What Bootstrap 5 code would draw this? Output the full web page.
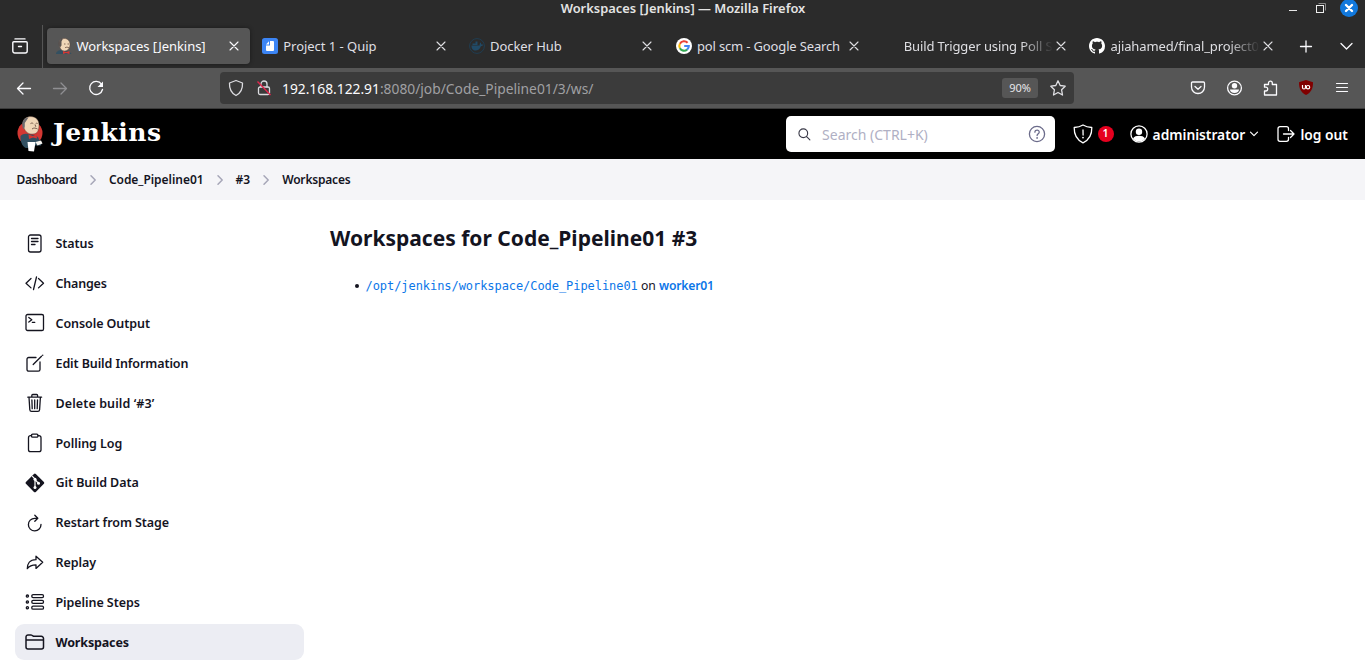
<!DOCTYPE html>
<html lang="en">
<head>
<meta charset="utf-8">
<title>Workspaces [Jenkins]</title>
<link href="https://cdn.jsdelivr.net/npm/bootstrap@5.3.0/dist/css/bootstrap.min.css" rel="stylesheet">
<style>
  body { font-family: "Noto Sans", "Open Sans", sans-serif; font-size: 12.5px; color: #14141f; background: #fff; height: 664px; overflow: hidden; }
  svg { display: block; flex: none; overflow: visible; }
  .ln { fill: none; stroke: currentColor; stroke-linecap: round; stroke-linejoin: round; }
  .t { white-space: nowrap; }
  .chrome { background: #2b2b2b; color: #fbfbfe; }
  .titlebar { height: 24px; position: relative; }
  .titlebar .caption { position: absolute; left: 1px; right: 0; top: -1px; text-align: center; font-size: 12.9px; font-weight: 600; line-height: 18px; color: #e4e4e4; }
  .winctl { position: absolute; right: 7px; top: -1px; }
  .tabstrip { height: 44px; }
  .viewbtn { width: 43px; height: 43px; border-right: 1px solid #565656; padding-left: 12px; margin-right: 2px; }
  .tab { width: 202.8px; height: 36px; margin: 0 2px; padding: 0 8px 0 8.5px; border-radius: 4px; font-size: 13px; letter-spacing: -.04px; color: #dfdfe3; }
  .tab.on { background: #565656; box-shadow: 0 0 4px rgba(0,0,0,.4); color: #fbfbfe; }
  .tab .t { flex: 1; min-width: 0; margin-left: 5px; padding-top: 1px; }
  .tab .cut { letter-spacing: -.12px; -webkit-mask-image: linear-gradient(90deg, #000 calc(100% - 32px), transparent); mask-image: linear-gradient(90deg, #000 calc(100% - 32px), transparent); }
  .tab .tight { letter-spacing: -.08px; }
  .toolbar { height: 41px; background: #565656; border-bottom: 1px solid #3a3a3a; color: #fbfbfe; padding-left: 16px; }
  .urlbar { width: 854px; height: 32px; margin-left: 116px; background: #3b3b3b; border-radius: 4px; padding: 0 8px; font-size: 13.8px; color: #a0a0a3; }
  .urlbar > .t { padding-top: 2px; }
  .zoomlvl { width: 36px; height: 20px; border-radius: 3px; background: #565656; color: #e6e6ea; font-size: 11px; }
  .jhead { height: 50px; background: #000; color: #fff; padding: 0 17px; }
  .brand { font-family: "DejaVu Serif", serif; font-weight: 700; font-size: 25px; line-height: 30px; letter-spacing: .5px; }
  .searchbox { width: 269px; height: 36px; border-radius: 5px; background: #fff; padding: 0 9px 0 12px; color: #b0b0c4; font-size: 14px; }
  .count { width: 16px; height: 16px; border-radius: 8px; background: #e6001f; font-size: 10.5px; font-weight: 600; }
  .acct { font-size: 13.8px; font-weight: 560; letter-spacing: -.02px; padding-top: 2px; }
  .acct.exit { width: 47.6px; }
  .acct.user { width: 91.8px; }
  .crumbs { height: 41px; background: #f5f5f8; padding-left: 16.5px; font-weight: 600; font-size: 12px; letter-spacing: -.03px; }
  .crumbs svg { margin: 0 12px; color: #a6a6b8; }
  .side { width: 289px; margin-left: 15px; padding-top: 25.8px; gap: 3.85px; }
  .task { height: 36px; border-radius: 9px; padding-left: 10px; font-weight: 600; color: #14141f; text-decoration: none; letter-spacing: -.07px; }
  .task:hover { color: #14141f; }
  .task.on { background: #ecedf3; font-weight: 700; letter-spacing: -.15px; }
  .task svg { margin-right: 10.5px; }
  .task .t { padding-top: 1.8px; }
  .mainpane { padding: 24px 0 0 26px; }
  h1 { font-size: 21px; font-weight: 700; line-height: 28px; margin: 0; }
  .spaces { list-style: none; padding-left: 24.5px; margin-top: 25px; line-height: 18px; font-size: 12.2px; }
  .spaces li::before { content: ""; display: inline-block; width: 4px; height: 4px; border-radius: 50%; background: #14141f; margin-right: 7px; vertical-align: 2px; }
  .spaces a { color: #0b76e8; text-decoration: none; }
  .spaces .mono { font-family: "DejaVu Sans Mono", monospace; font-size: 12px; letter-spacing: -.06px; }
  .spaces .node { font-weight: 600; letter-spacing: -.2px; }
</style>
</head>
<body>
<svg width="0" height="0" class="position-absolute">
  <symbol id="x" viewBox="0 0 16 16"><path class="ln" stroke-width="1.1" d="M4 4l8 8M12 4l-8 8"/></symbol>
  <symbol id="sep" viewBox="0 0 8 12"><path class="ln" stroke-width="1.5" d="M2 1.800L6.200 6 2 10.200"/></symbol>
  <symbol id="butler" viewBox="0 0 26 36">
    <ellipse cx="13" cy="17" rx="12.500" ry="12" fill="#d33833"/>
    <path d="M3.500 20c2-2 4.500-2.500 7-2l6 1c3 .5 5 2 5.500 4.500l3 3-1 3-6 0-1 2.500H9c-3-1-5-5-5.500-9z" fill="#335061"/>
    <path d="M6 8C5.500 3 10 .500 14 .600c5 .200 8 3.600 8 8.400 0 5-1.500 9-6 9C10.500 18.500 7 15 6 8z" fill="#f0d6b7" stroke="#49332a" stroke-width=".4"/>
    <path d="M6.200 4.500C4.500 7 5 11 6.800 13.500l1-3V7l3.700-5.500C9 1.500 7 2.800 6.200 4.500z" fill="#6d6b6d"/>
    <path d="M13.500 7.600c1-.7 2-.7 2.800 0m2.400 0c.7-.5 1.400-.5 2 0M18 8.500l.8 2.300M15 13c1.800-1.500 3.800-1 5.500 0" stroke="#6b5042" stroke-width=".9" fill="none"/>
    <path d="M11.500 18.500l4.300 1.500 3.700-1.500.5 4-4-1-4 1.500z" fill="#d33833"/>
    <path d="M10.500 26h8l-1.500 9.500-5.500-.5z" fill="#fff"/><path d="M18.500 26l5.500-1.500 1.500 3-5 2z" fill="#f7f3ee"/>
  </symbol>
</svg>

<header class="chrome">
  <div class="titlebar">
    <div class="caption">Workspaces [Jenkins] — Mozilla Firefox</div>
    <div class="winctl d-flex align-items-center">
      <svg width="70" height="18" viewBox="0 0 70 18"><path d="M1 11.500h8" stroke="#e8e8e8"/><path d="M30.500 4.500h7v7" fill="none" stroke="#8a8a8a"/><rect x="28.500" y="6.500" width="7" height="7" fill="#2b2b2b" stroke="#eee"/><circle cx="61" cy="9" r="9" fill="#1178dc"/><path d="M58 6l6 6M64 6l-6 6" stroke="#fff" stroke-width="2.400" stroke-linecap="round"/></svg>
    </div>
  </div>
  <div class="tabstrip d-flex align-items-center">
    <div class="viewbtn d-flex align-items-center">
      <svg width="16" height="16" viewBox="0 0 16 16"><g class="ln" stroke-width="1.400"><path d="M3 .9h10M1.800 3.800h12.400a1 1 0 0 1 1 1V13a2 2 0 0 1-2 2H2.800a2 2 0 0 1-2-2V4.800a1 1 0 0 1 1-1zM6.500 8.500h3"/></g></svg>
    </div>
    <div class="tab on d-flex align-items-center">
      <svg width="16" height="16" viewBox="0 0 16 16"><path d="M0 16c0-2.500 3-4 6-4s8 1 9.500 4z" fill="#335061"/><path d="M3 5.500C3 2 5.500.5 8.500.5S14 3 14 6.500 12 13 8.500 13 3.500 9.500 3 5.500z" fill="#f0d6b7" stroke="#5a463c" stroke-width=".5"/><path d="M3 8C1.800 4 3.800 1 7 .5L5.500 3.500v4L4 9.500z" fill="#5a5350"/><path d="M8 6h1.500m2 0H13M9 9.800c1.500-1 2.500-.7 4 0" stroke="#6b5042" stroke-width=".8" fill="none"/><path d="M7 13l3 1 3.500-1v3L10 15l-3 1z" fill="#d33833"/></svg>
      <span class="t">Workspaces [Jenkins]</span><svg width="16" height="16"><use href="#x"/></svg>
    </div>
    <div class="tab d-flex align-items-center">
      <svg width="16" height="16" viewBox="0 0 16 16"><rect width="16" height="16" rx="2.500" fill="#3c85f5"/><path d="M8 3h3a1 1 0 0 1 1 1v8a1 1 0 0 1-1 1H5a1 1 0 0 1-1-1V7.500h4z" fill="#fff"/><path d="M7 3.200v3.300H4z" fill="#fff"/></svg>
      <span class="t">Project 1 - Quip</span><svg width="16" height="16"><use href="#x"/></svg>
    </div>
    <div class="tab d-flex align-items-center">
      <svg width="16" height="16" viewBox="0 0 16 16"><circle cx="8" cy="8" r="7.400" fill="none" stroke="#1f3d52"/><path d="M2.500 7.500h8c.5-1.500 0-2 .8-3 .8.500 1 1.500 1 2 .8-.1 1.500 0 1.800.3-.3 1-1.200 1.400-2.200 1.400C11 11 9 12.500 6.500 12.500S2.300 11 2.500 7.500zM3.500 5.500h5V7h-5zM6.500 3.500h2v2h-2z" fill="#214a66"/></svg>
      <span class="t tight">Docker Hub</span><svg width="16" height="16"><use href="#x"/></svg>
    </div>
    <div class="tab d-flex align-items-center">
      <svg width="16" height="16" viewBox="0 0 16 16"><circle cx="8" cy="8" r="8" fill="#fff"/><g fill="none" stroke-width="2.100"><path d="M11.600 4.800A4.800 4.800 0 0 0 3.900 5.700" stroke="#ea4335"/><path d="M3.900 5.700a4.800 4.800 0 0 0 0 4.600" stroke="#fbbc05"/><path d="M3.900 10.300a4.800 4.800 0 0 0 7.200 1.300" stroke="#34a853"/><path d="M11.100 11.600A4.600 4.600 0 0 0 12.800 8H8.200" stroke="#4285f4"/></g></svg>
      <span class="t" style="letter-spacing:-.15px">pol scm - Google Search</span><svg width="16" height="16"><use href="#x"/></svg>
    </div>
    <div class="tab d-flex align-items-center">
      <svg width="16" height="16"></svg>
      <span class="t cut">Build Trigger using Poll S</span><svg width="16" height="16"><use href="#x"/></svg>
    </div>
    <div class="tab d-flex align-items-center">
      <svg width="16" height="16" viewBox="0 0 16 16"><path fill="#fff" d="M8 0C3.580 0 0 3.580 0 8c0 3.540 2.290 6.530 5.470 7.590.4.070.55-.17.55-.38 0-.19-.01-.82-.01-1.490-2.010.37-2.530-.49-2.690-.94-.09-.23-.48-.94-.82-1.130-.28-.15-.68-.52-.01-.53.63-.01 1.080.58 1.230.82.72 1.210 1.870.87 2.330.66.070-.52.28-.87.51-1.070-1.780-.2-3.640-.89-3.640-3.950 0-.87.31-1.590.82-2.150-.08-.2-.36-1.020.08-2.120 0 0 .67-.21 2.200.82.64-.18 1.320-.27 2-.27s1.360.09 2 .27c1.530-1.040 2.200-.82 2.200-.82.44 1.100.16 1.920.08 2.120.51.56.82 1.270.82 2.150 0 3.070-1.870 3.750-3.650 3.950.29.25.54.73.54 1.480 0 1.070-.01 1.930-.01 2.200 0 .21.15.46.55.38A8.010 8.010 0 0 0 16 8c0-4.420-3.580-8-8-8z"/></svg>
      <span class="t cut">ajiahamed/final_project0</span><svg width="16" height="16"><use href="#x"/></svg>
    </div>
    <svg width="66" height="16" viewBox="0 0 66 16" style="margin-left:12px"><g class="ln" stroke-width="1.300"><path d="M2.500 8.500h11M8 3v11M43 5.500L48.500 11 54 5.500"/></g></svg>
  </div>
  <div class="toolbar d-flex align-items-center">
    <svg width="88" height="16" viewBox="0 0 88 16"><g class="ln" stroke-width="1.300"><path d="M14.500 8.500H1.500M7 3L1.500 8.500 7 14"/><path stroke="#8f8f92" d="M37.500 8.500h13M45 3l5.500 5.500L45 14"/><path d="M85.500 4.200A6.500 6.500 0 1 0 86.500 9.500"/></g><path d="M87 1.500v5.500h-5.500z" fill="#fbfbfe"/></svg>
    <div class="urlbar d-flex align-items-center">
      <svg width="46" height="18" viewBox="0 0 46 18"><g class="ln" stroke-width="1.300" style="color:#dcdce0"><path d="M8 1.500L14.500 4c.3 6-2 10.200-6.500 12.500C3.500 14.200 1.200 10 1.500 4z"/><rect x="30.500" y="8" width="11" height="7.500" rx="1.500"/><path d="M33 8V5a3 3 0 0 1 6 0v3"/></g><path d="M29.500 2.500l13 13.500" stroke="#e2264d" stroke-width="1.400"/></svg>
      <span class="t" style="margin-left:8px"><span style="color:#fbfbfe">192.168.122.91</span>:8080/job/Code_Pipeline01/3/ws/</span>
      <div class="zoomlvl d-flex align-items-center justify-content-center ms-auto"><span class="t">90%</span></div>
      <svg width="16" height="16" viewBox="0 0 16 16" style="margin-left:12px;color:#e0e0e4"><path class="ln" stroke-width="1.300" d="M8 .8l2.200 4.700 5 .7-3.600 3.600.9 5.200L8 12.500 3.500 15l.9-5.200L.8 6.200l5-.7z"/></svg>
    </div>
    <svg width="160" height="18" viewBox="0 0 160 18" style="margin-left:116px">
      <g class="ln" stroke-width="1.300"><path d="M2.500 3h11a1 1 0 0 1 1 1v4c0 4-3 6.500-6.500 6.500S1.500 12 1.500 8V4a1 1 0 0 1 1-1zM5 7.500l3 2.800 3-2.800"/><circle cx="44.500" cy="9" r="6.900"/><path d="M74.500 16v-4h1.300a1.900 1.900 0 0 0 0-3.800h-1.300V5.500h4V4a1.900 1.900 0 0 1 3.800 0v1.500h4.200V16z"/></g><circle cx="44.500" cy="6.800" r="2.700" fill="#fbfbfe"/><path d="M40 10.500h9c0 2-2 3.500-4.500 3.500S40 12.500 40 10.500z" fill="#fbfbfe"/>
      <path d="M116 1l7 2.300c0 6-1.500 10-7 12.700-5.500-2.700-7-6.700-7-12.700z" fill="#800000"/><path d="M112.500 6V8.500a1.500 1.500 0 0 0 3 0V6" fill="none" stroke="#fff" stroke-width="1.200"/><circle cx="118" cy="8.200" r="1.700" fill="none" stroke="#fff" stroke-width="1.200"/>
      <path d="M146.500 4.500h11M146.500 8.500h11M146.500 12.500h11" stroke="#fbfbfe" stroke-width="1.200" stroke-linecap="round"/>
    </svg>
  </div>
</header>

<nav class="jhead d-flex align-items-center">
  <svg width="26" height="36"><use href="#butler"/></svg>
  <span class="t brand" style="margin:-3px 0 0 10px">Jenkins</span>
  <div class="searchbox d-flex align-items-center ms-auto">
    <svg width="13" height="13" viewBox="0 0 14 14" style="color:#3a3a48"><path class="ln" stroke-width="1.200" d="M9.300 9.300l3.500 3.500M10.400 5.700a4.700 4.700 0 1 1-9.400 0 4.700 4.700 0 0 1 9.400 0z"/></svg>
    <span class="t" style="margin-left:11.500px;padding-top:1px">Search (CTRL+K)</span>
    <svg class="ms-auto" width="18" height="18" viewBox="0 0 18 18" style="color:#6b6b8a"><g class="ln" stroke-width="1.300"><circle cx="9" cy="9" r="7.600"/><path d="M6.900 7.200c0-2.900 4.500-2.800 4.300 0 0 1.500-2.100 1.500-2.100 3.300"/></g><circle cx="9.100" cy="12.900" r=".9" fill="currentColor"/></svg>
  </div>
  <svg style="margin-left:18px" width="20" height="20" viewBox="0 0 20 20"><g class="ln" stroke-width="1.300"><path d="M10 1c2.500 1.500 5.500 2.300 8.800 2.500C19 11 16 16 10 18.800 4 16 1 11 1.200 3.500 4.500 3.300 7.500 2.500 10 1zM10 6l.1 5"/></g><circle cx="10" cy="13.600" r=".9" fill="#fff"/></svg>
  <span class="count d-flex align-items-center justify-content-center" style="margin-left:5px">1</span>
  <svg style="margin-left:16px" width="18" height="18" viewBox="0 0 18 18"><circle cx="9" cy="9" r="8.100" fill="none" stroke="#fff" stroke-width="1.300"/><circle cx="9" cy="6.800" r="3.200" fill="#fff"/><path d="M3 13.500C4 11.500 6.500 10.800 9 10.800s5 .7 6 2.700A7 7 0 0 1 9 16.500a7 7 0 0 1-6-3z" fill="#fff"/></svg>
  <span class="t acct user" style="margin-left:5px">administrator</span>
  <svg style="margin-left:6px" width="8" height="8" viewBox="0 0 8 8"><path class="ln" stroke-width="1.200" d="M.5 2.200L4 5.700l3.500-3.500"/></svg>
  <svg style="margin-left:19px" width="18" height="18" viewBox="0 0 18 18"><path class="ln" stroke-width="1.300" d="M11.500 5.500V3.700a2 2 0 0 0-2-2H3a2 2 0 0 0-2 2v10.600a2 2 0 0 0 2 2h6.500a2 2 0 0 0 2-2v-1.800M13.500 5.500L17 9l-3.500 3.500M6.500 9H17"/></svg>
  <span class="t acct exit" style="margin-left:5px">log out</span>
</nav>

<div class="crumbs d-flex align-items-center">
  <span class="t" style="letter-spacing:-.38px">Dashboard</span><svg width="8" height="12"><use href="#sep"/></svg>
  <span class="t">Code_Pipeline01</span><svg width="8" height="12"><use href="#sep"/></svg>
  <span class="t">#3</span><svg width="8" height="12"><use href="#sep"/></svg>
  <span class="t" style="letter-spacing:-.2px">Workspaces</span>
</div>

<div class="d-flex">
  <aside class="side d-flex flex-column">
    <a href="#" class="task d-flex align-items-center"><svg width="20" height="20" viewBox="0 0 20 20"><path class="ln" stroke-width="1.300" d="M5.500 1h8.500a2 2 0 0 1 2 2v13a2 2 0 0 1-2 2H5.500a2 2 0 0 1-2-2v-13a2 2 0 0 1 2-2zM6.500 4.500h6.500M6.500 7.500h6.500M6.500 10.500h3.500"/></svg><span class="t">Status</span></a>
    <a href="#" class="task d-flex align-items-center"><svg width="20" height="20" viewBox="0 0 20 20"><path class="ln" stroke-width="1.300" d="M6 4.500L1 9.200 6 13.900M13.500 4.500l5 4.700-5 4.700M11.500 3l-3 12.500"/></svg><span class="t" style="letter-spacing:-.2px">Changes</span></a>
    <a href="#" class="task d-flex align-items-center"><svg width="20" height="20" viewBox="0 0 20 20"><g class="ln" stroke-width="1.300"><rect x="1" y="1.500" width="17.500" height="16" rx="1.600"/><path d="M3.800 4.500l3 2.300-3 2.300M7.300 9.300h2.500"/></g></svg><span class="t">Console Output</span></a>
    <a href="#" class="task d-flex align-items-center"><svg width="20" height="20" viewBox="0 0 20 20"><g class="ln" stroke-width="1.300"><path d="M15 9v7.500a1.700 1.700 0 0 1-1.700 1.700H3.700A1.700 1.700 0 0 1 2 16.500V6.200a1.700 1.700 0 0 1 1.700-1.700H11M8.200 11.500l8.300-8.300M17.700 2.200l.1-.1"/></g></svg><span class="t" style="letter-spacing:-.1px">Edit Build Information</span></a>
    <a href="#" class="task d-flex align-items-center" style="letter-spacing:.1px"><svg width="20" height="20" viewBox="0 0 20 20"><path class="ln" stroke-width="1.300" d="M4 4.200l.8 12.500c.1 1 .8 1.700 1.700 1.700h6.400c.9 0 1.600-.7 1.700-1.700l.8-12.500M2.800 4.200h13.800M6.800 4V2.500c0-.6.400-1 1-1h3.800c.6 0 1 .4 1 1V4M9.700 7v8.700M6.900 7l.3 8.700M12.500 7l-.3 8.700"/></svg><span class="t">Delete build ‘#3’</span></a>
    <a href="#" class="task d-flex align-items-center"><svg width="20" height="20" viewBox="0 0 20 20"><g class="ln" stroke-width="1.300"><path d="M13 2.700h1a2 2 0 0 1 2 2v12a2 2 0 0 1-2 2H5.500a2 2 0 0 1-2-2v-12a2 2 0 0 1 2-2h1"/><rect x="6.500" y="1.200" width="6.500" height="3" rx="1.200"/></g></svg><span class="t">Polling Log</span></a>
    <a href="#" class="task d-flex align-items-center"><svg width="20" height="20" viewBox="0 0 20 20"><rect x="2.900" y="2.900" width="14" height="14" rx="1.300" transform="rotate(45 9.900 9.900)" fill="#14141f"/><path d="M7.200 3.200L10 6v8.500M10 6.500l3.300 3.600" stroke="#fff" stroke-width="1.200" fill="none"/><circle cx="10" cy="6.300" r="1.500" fill="#fff"/><circle cx="10" cy="14.400" r="1.500" fill="#fff"/><circle cx="13.500" cy="10.200" r="1.500" fill="#fff"/></svg><span class="t">Git Build Data</span></a>
    <a href="#" class="task d-flex align-items-center"><svg width="20" height="20" viewBox="0 0 20 20"><path class="ln" stroke-width="1.300" d="M16 11.500a6.300 6.300 0 1 1-6.300-6.200h2.500M9.800 2.200l3 3.100-3 3"/></svg><span class="t">Restart from Stage</span></a>
    <a href="#" class="task d-flex align-items-center"><svg width="20" height="20" viewBox="0 0 20 20"><path class="ln" stroke-width="1.300" d="M17.700 9.300L11 3.200v3.500c-6.500 0-8.700 4.500-8.700 9C4.500 12.500 7 11.800 11 11.800v3.600z"/></svg><span class="t">Replay</span></a>
    <a href="#" class="task d-flex align-items-center"><svg width="20" height="20" viewBox="0 0 20 20"><g class="ln" stroke-width="1.300"><rect x="6.800" y="2.600" width="11.700" height="3" rx="1.300"/><rect x="6.800" y="8.400" width="11.700" height="3" rx="1.300"/><rect x="6.800" y="14.200" width="11.700" height="3" rx="1.300"/><circle cx="2.400" cy="4.100" r="1.100"/><circle cx="2.400" cy="9.900" r="1.100"/><circle cx="2.400" cy="15.700" r="1.100"/></g></svg><span class="t">Pipeline Steps</span></a>
    <a href="#" class="task on d-flex align-items-center"><svg width="20" height="20" viewBox="0 0 20 20"><path class="ln" stroke-width="1.500" d="M1 7.800V4.900a2 2 0 0 1 2-2h2.800c.5 0 .9.100 1.200.4l.9.600c.4.300.8.400 1.300.4H16.300a2.200 2.200 0 0 1 2.200 2.200v8.600a2 2 0 0 1-2 2H3a2 2 0 0 1-2-2V8h17.500"/></svg><span class="t">Workspaces</span></a>
  </aside>
  <main class="mainpane">
    <h1 class="t">Workspaces for Code_Pipeline01 #3</h1>
    <ul class="spaces"><li><a href="#" class="mono t">/opt/jenkins/workspace/Code_Pipeline01</a> <span class="t">on</span> <a href="#" class="t node">worker01</a></li></ul>
  </main>
</div>
<script src="https://cdn.jsdelivr.net/npm/bootstrap@5.3.0/dist/js/bootstrap.bundle.min.js"></script>
</body>
</html>
